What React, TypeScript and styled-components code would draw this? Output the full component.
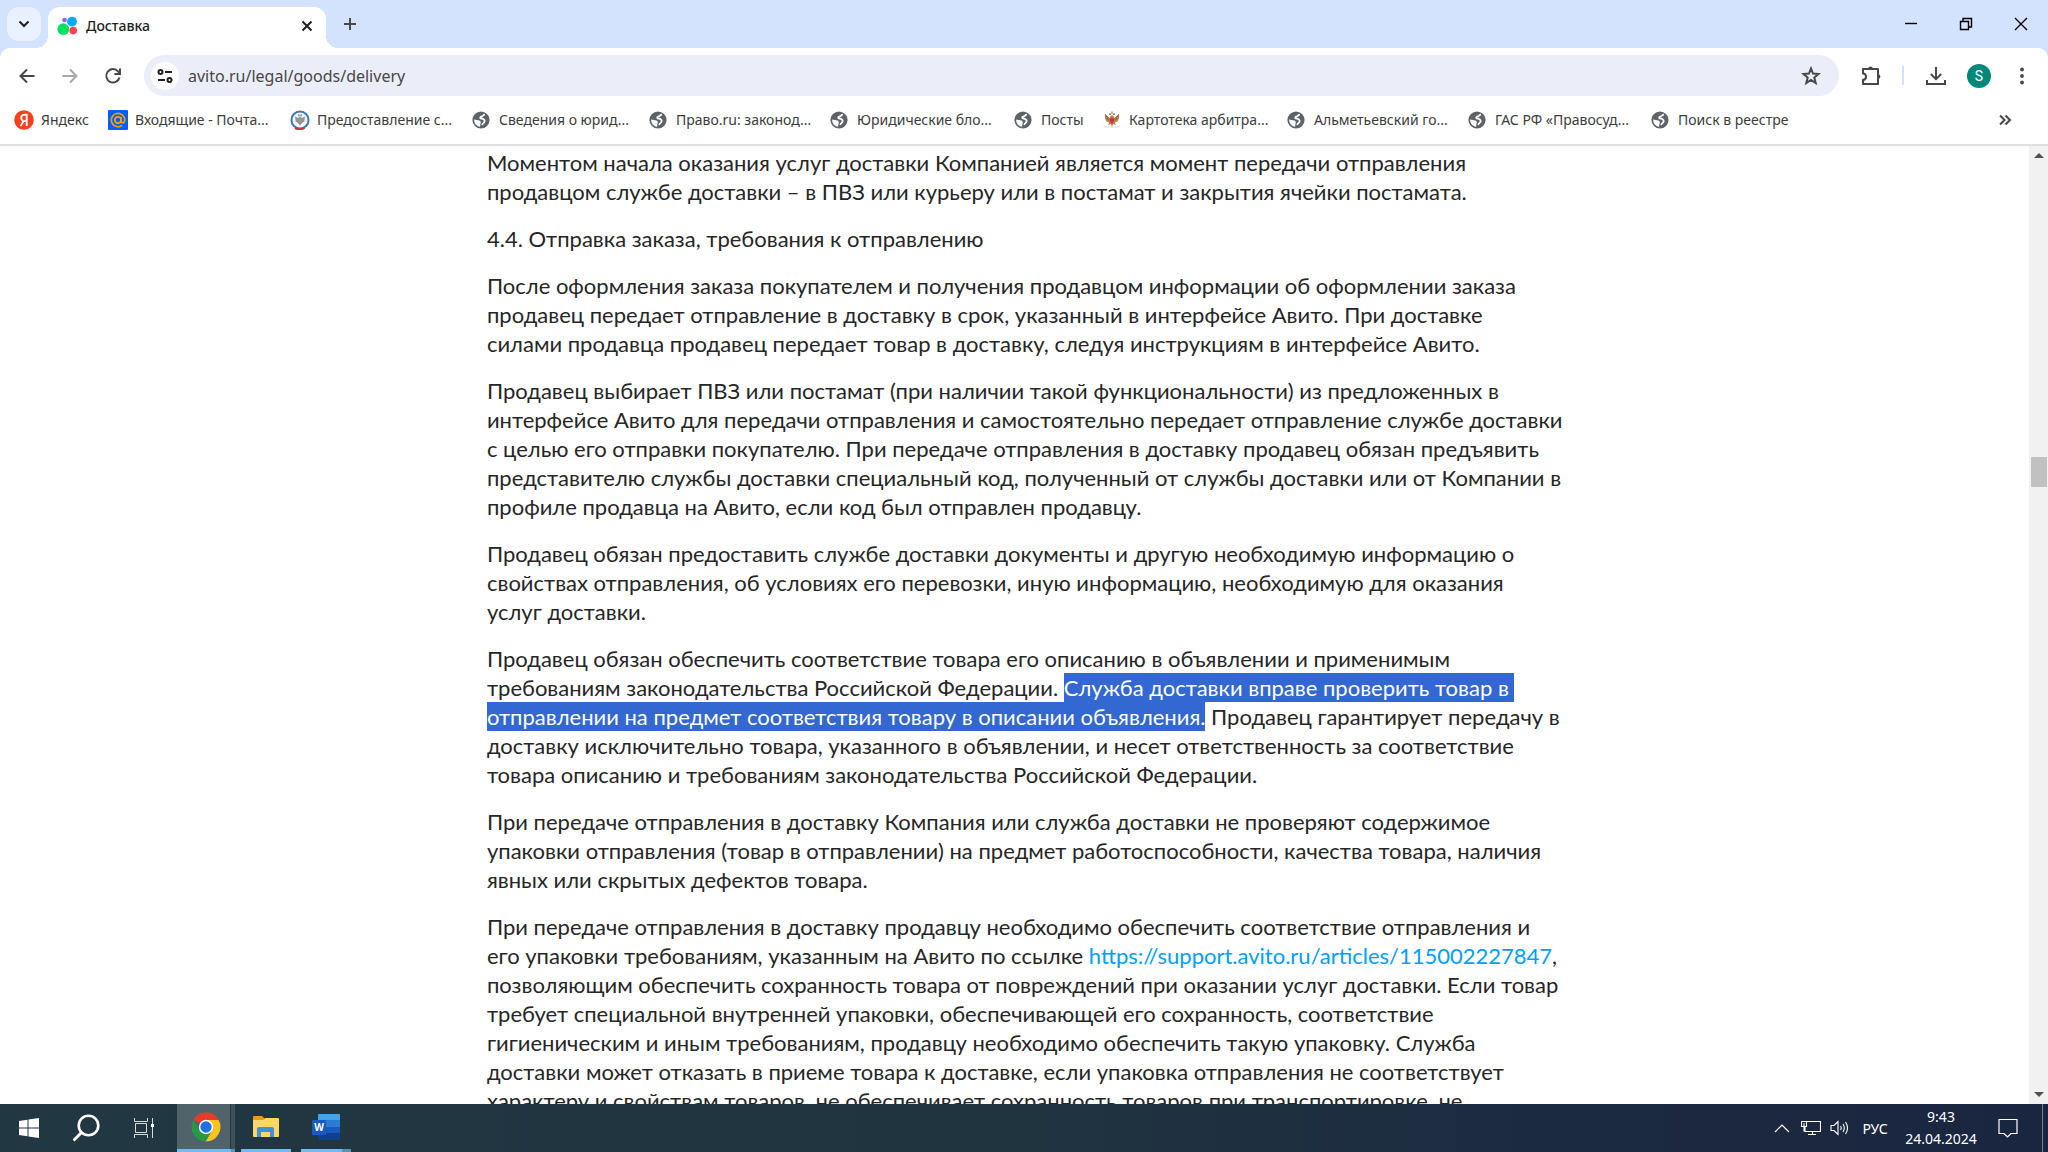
import React from "react";
import styled, { createGlobalStyle } from "styled-components";

const GlobalStyle = createGlobalStyle`
  *, *::before, *::after { box-sizing: border-box; }
  body { margin: 0; overflow: hidden; background: #fff; }
  button { border: 0; padding: 0; background: none; font: inherit; color: inherit; }
  svg { display: block; flex: none; }
`;

const uiFont = `"Noto Sans", "Open Sans", sans-serif`;

const Screen = styled.div`
  display: flex;
  flex-direction: column;
  height: 100vh;
  font-family: ${uiFont};
  color: #1f1f1f;
`;

/* ---------- Tab strip ---------- */

const TabStrip = styled.header`
  display: flex;
  align-items: center;
  flex: none;
  height: 48px;
  padding-left: 7px;
  background: #d3e3fd;
`;

const TabSearch = styled.button`
  display: grid;
  place-items: center;
  width: 34px;
  height: 34px;
  border-radius: 12px;
  background: #e9f1fe;
`;

const Tab = styled.div`
  position: relative;
  display: flex;
  align-items: center;
  align-self: flex-end;
  width: 278px;
  height: 41px;
  margin-left: 7px;
  padding: 0 9px 4px 9px;
  border-radius: 12px 12px 0 0;
  background: #fff;

  &::before,
  &::after {
    content: "";
    position: absolute;
    bottom: 0;
    width: 12px;
    height: 12px;
  }
  &::before {
    right: 100%;
    background: radial-gradient(circle at 0 0, transparent 12px, #fff 12px);
  }
  &::after {
    left: 100%;
    background: radial-gradient(circle at 100% 0, transparent 12px, #fff 12px);
  }
`;

const TabTitle = styled.span`
  flex: 1;
  margin-left: 9px;
  font-size: 14px;
  font-weight: 500;
  line-height: 20px;
`;

const IconButton = styled.button<{ $w?: number }>`
  display: grid;
  place-items: center;
  flex: none;
  width: ${(p) => p.$w ?? 36}px;
  height: 36px;
  color: #474747;

  &:disabled {
    color: #a8a8a8;
  }
`;

const TabClose = styled(IconButton)`
  height: 20px;
  color: #1f1f1f;
`;

const NewTab = styled(IconButton)`
  margin-left: 6px;
`;

const WindowControls = styled.div`
  display: flex;
  margin-left: auto;
`;

const WindowButton = styled(IconButton)`
  color: #000;
`;

/* ---------- Toolbar ---------- */

const ToolbarBack = styled.div`
  flex: none;
  background: #d3e3fd;
`;

const Toolbar = styled.nav`
  display: flex;
  align-items: center;
  height: 55px;
  padding: 0 8px 0 5px;
  border-radius: 10px 10px 0 0;
  background: #fff;
`;

const Omnibox = styled.form`
  display: flex;
  align-items: center;
  flex: 1;
  height: 41px;
  margin-left: 10px;
  padding: 0 10px 0 7px;
  border-radius: 21px;
  background: #ebeef8;
`;

const SiteInfo = styled.button`
  display: grid;
  place-items: center;
  flex: none;
  width: 28px;
  height: 28px;
  border-radius: 50%;
  background: #fff;
`;

const Address = styled.input`
  flex: 1;
  min-width: 0;
  margin-left: 9px;
  padding: 0;
  border: 0;
  outline: 0;
  background: transparent;
  color: #474747;
  font-family: ${uiFont};
  font-size: 16px;
  line-height: 24px;
`;

const ToolbarActions = styled.div`
  display: flex;
  align-items: center;
  margin-left: 14px;
`;

const Divider = styled.span`
  width: 2px;
  height: 19px;
  margin: 0 14px 0 13px;
  background: #d3e3fd;
`;

const Avatar = styled.button`
  width: 24px;
  height: 24px;
  margin: 0 13px;
  border-radius: 50%;
  background: #00897b;
  color: #fff;
  font-family: Roboto, sans-serif;
  font-size: 14px;
  line-height: 24px;
  text-align: center;
`;

/* ---------- Bookmarks ---------- */

const BookmarkBar = styled.nav`
  display: flex;
  align-items: center;
  height: 43px;
  padding: 0 25px 7px 14px;
  border-bottom: 2px solid #dedfe1;
  background: #fff;
  overflow: hidden;
`;

const Bookmark = styled.a<{ $w: number }>`
  display: flex;
  align-items: center;
  gap: 7px;
  flex: none;
  width: ${(p) => p.$w}px;
  color: #3c3c3c;
  font-size: 14px;
  line-height: 20px;
  text-decoration: none;
  white-space: nowrap;
`;

const MoreBookmarks = styled(IconButton)`
  height: 24px;
  margin-left: auto;
`;

/* ---------- Document ---------- */

const Viewport = styled.div`
  display: flex;
  flex: 1;
  min-height: 0;
`;

const Page = styled.main`
  display: grid;
  grid-template-columns: 24fr 76fr;
  align-items: start;
  flex: 1;
  min-width: 0;
  overflow: hidden;
  padding-top: 2px;
`;

const Article = styled.article`
  grid-column: 2;
  max-width: 1076px;
  color: #262626;
  font-family: Lato, "Open Sans", sans-serif;
  font-size: 22px;
  line-height: 29px;
`;

const Paragraph = styled.p`
  margin: 0 0 18px;
`;

const Heading = styled.h2`
  margin: 0 0 18px;
  font-size: 22px;
  font-weight: 400;
  line-height: 29px;
`;

const Selected = styled.mark`
  padding: 1px 0;
  background: #3367d1;
  color: #fff;
`;

const ArticleLink = styled.a`
  color: #009eff;
  text-decoration: none;
`;

const Scrollbar = styled.div`
  display: flex;
  flex-direction: column;
  flex: none;
  width: 19px;
  background: #f1f1f1;
`;

const ScrollButton = styled.button`
  display: grid;
  place-items: center;
  flex: none;
  height: 19px;
`;

const Track = styled.span<{ $share: number }>`
  flex: ${(p) => p.$share} 0 0;
`;

const Thumb = styled.span`
  flex: none;
  height: 30px;
  margin: 0 1px 0 2px;
  background: #c1c1c1;
`;

/* ---------- Taskbar ---------- */

const Taskbar = styled.footer`
  display: flex;
  align-items: stretch;
  flex: none;
  height: 48px;
  background: linear-gradient(90deg, #213742 0%, #203440 50%, #1c2a40 75%, #1a2640 100%);
  color: #fff;
`;

const TaskButton = styled.button`
  display: grid;
  place-items: center;
  width: 58px;
`;

const AppButton = styled.button<{ $active?: boolean; $stack?: boolean }>`
  position: relative;
  display: grid;
  place-items: center;
  width: ${(p) => (p.$active ? 58 : 50)}px;
  margin: ${(p) => (p.$active ? "0 1px 0 3px" : "0 5px")};
  border-bottom: 3px solid #76b9ed;
  background: ${(p) =>
    p.$active ? "linear-gradient(90deg, #50636b 53px, #26373f 53px, #26373f 54px, #3d4f58 54px)" : "none"};

  &::after {
    content: "";
    position: absolute;
    right: 0;
    bottom: -3px;
    width: ${(p) => (p.$active ? 4 : 9)}px;
    height: 3px;
    background: #5a91b8;
    display: ${(p) => (p.$stack ? "block" : "none")};
  }
`;

const Tray = styled.div`
  display: flex;
  align-items: stretch;
  margin-left: auto;
  margin-right: 12px;
`;

const TrayButton = styled.button<{ $w: number }>`
  display: grid;
  place-items: center;
  width: ${(p) => p.$w}px;
  font-size: 14px;
`;

const Clock = styled.button`
  width: 90px;
  font-size: 14px;
  line-height: 22px;
  text-align: center;
`;

const ShowDesktop = styled.button`
  width: 6px;
  border-left: 1px solid #77808e;
`;

/* ---------- Icons ---------- */

const Stroke = ({ d, size = 20, w = 2, children }: {
  d: string; size?: number; w?: number; children?: React.ReactNode;
}) => (
  <svg width={size} height={size} viewBox={`0 0 ${size} ${size}`} fill="none" stroke="currentColor" strokeWidth={w}>
    <path d={d} />
    {children}
  </svg>
);

const Globe = () => (
  <svg width="20" height="20" viewBox="0 0 20 20">
    <circle cx="9" cy="10" r="8.6" fill="#5f6368" />
    <path d="M2.1 9.6 L6.1 10.2 C8.1 10.5 8.9 11.4 8.8 12.6 L8.3 14.4 L8.1 16.8 C4.7 16.4 2.1 13.6 2.1 9.6Z" fill="#fff" />
    <path d="M12.9 4.6 C10.9 4.6 11.5 6 9.9 6.4 C8.1 6.9 7.7 8 8.9 8.4 C10.7 8.8 12.9 9.2 12.7 11.2 C12.5 13 10.9 12.8 10.1 15" fill="none" stroke="#fff" strokeWidth="1.7" />
  </svg>
);

const Yandex = () => (
  <svg width="20" height="20" viewBox="0 0 20 20">
    <circle cx="10" cy="10" r="9.8" fill="#fc3f1d" />
    <path d="M12.7 16 V4.8 H10.8 C8.5 4.8 7.2 6 7.2 8 C7.2 9.6 8 10.4 9.4 11.4 L6.6 16 M10.2 11 H12.7" fill="none" stroke="#fff" strokeWidth="1.9" />
  </svg>
);

const MailRu = () => (
  <svg width="20" height="20" viewBox="0 0 20 20">
    <rect width="20" height="20" rx="1" fill="#005ff9" />
    <circle cx="10" cy="10" r="3.1" fill="none" stroke="#ff9e00" strokeWidth="1.7" />
    <path d="M13.1 6.9 V11 C13.1 13.6 16.7 13.6 16.7 10 A6.7 6.7 0 1 0 14 15.4" fill="none" stroke="#ff9e00" strokeWidth="1.7" />
  </svg>
);

const TaxService = () => (
  <svg width="20" height="20" viewBox="0 0 20 20">
    <circle cx="10" cy="10" r="8.6" fill="#f4f5f4" stroke="#3f78a8" strokeWidth="2" />
    <path d="M5 18 Q10 20.6 14.6 18" fill="none" stroke="#d4303c" strokeWidth="2" />
    <path d="M5 6.5 L8.3 8 L10 6 L11.7 8 L15 6.5 L14.4 11.5 L12 13 L10 15.5 L8 13 L5.6 11.5Z" fill="#8b969d" />
    <path d="M8.7 8.8 H11.4 V11.5 L10 12.8 L8.7 11.5Z" fill="#b89a72" />
    <circle cx="8.8" cy="5.3" r="1" fill="#8b969d" /><circle cx="11.2" cy="5.3" r="1" fill="#8b969d" />
  </svg>
);

const Eagle = () => (
  <svg width="20" height="20" viewBox="0 0 20 20">
    <path d="M1.5 16.8 H18.5" stroke="#ece8e2" strokeWidth="2" />
    <path d="M2.8 3.4 L5 5.6 L7.5 8 L9 5.5 H11 L12.5 8 L15 5.6 L17.2 3.4 L17 8.6 L15.4 11.4 L12.8 12.6 L14 15 L11.2 14 L10 16.4 L8.8 14 L6 15 L7.2 12.6 L4.6 11.4 L3 8.6Z" fill="#b5814f" />
    <path d="M4.2 5.9 L6.4 10 M15.8 5.9 L13.6 10" stroke="#8a6040" strokeWidth="1" />
    <path d="M8 8.3 H12 V11.5 L10 13.2 L8 11.5Z" fill="#cf3038" />
    <path d="M8 2.6 L9.2 5 H7Z M12 2.6 L13 5 H10.8Z M9.5 1.6 H10.5 V4 H9.5Z" fill="#8c6a50" />
  </svg>
);

const bookmarks: [string, React.FC, number][] = [
  ["Яндекс", Yandex, 94],
  ["Входящие - Почта...", MailRu, 182],
  ["Предоставление с...", TaxService, 182],
  ["Сведения о юрид...", Globe, 177],
  ["Право.ru: законод...", Globe, 181],
  ["Юридические бло...", Globe, 184],
  ["Посты", Globe, 88],
  ["Картотека арбитра...", Eagle, 185],
  ["Альметьевский го...", Globe, 181],
  ["ГАС РФ «Правосуд...", Globe, 183],
  ["Поиск в реестре", Globe, 160],
];

const Chrome = () => (
  <svg width="30" height="30" viewBox="0 0 30 30">
    <path d="M15 15 L2.3 7.7 A14.6 14.6 0 0 1 27.7 7.7Z" fill="#e33b2e" />
    <path d="M27.6 8 A14.5 14.5 0 0 1 14.5 29.5 L21 18.5 L15 8Z" fill="#fcc31e" />
    <path d="M2.4 7.8 A14.5 14.5 0 0 0 14.6 29.5 L20.8 18.6 L9 18.4Z" fill="#279847" />
    <circle cx="15" cy="15" r="7.2" fill="#fff" />
    <circle cx="15" cy="15" r="5.7" fill="#1f6fe8" />
  </svg>
);

const Explorer = () => (
  <svg width="28" height="24" viewBox="0 0 28 24">
    <path d="M1 2 Q1 1 2 1 H10 L12 3 V6 H1Z" fill="#e4a00f" />
    <path d="M1 5 H11 L13 3 H26 Q27 3 27 4 V21 Q27 22 26 22 H2 Q1 22 1 21Z" fill="#ffd667" />
    <path d="M5 22 V14 Q5 12 7 12 H20 Q22 12 22 14 V22 H18 V17 H9 V22Z" fill="#3d93d8" />
  </svg>
);

const Word = () => (
  <svg width="30" height="28" viewBox="0 0 30 28">
    <path d="M7 2 Q7 1 8 1 H28 Q29 1 29 2 V8 H7Z" fill="#41a5ee" />
    <path d="M7 7 H29 V14 H7Z" fill="#2b7cd3" />
    <path d="M7 14 H29 V20 H7Z" fill="#185abd" />
    <path d="M7 20 H29 V26 Q29 27 28 27 H8 Q7 27 7 26Z" fill="#103f91" />
    <rect x="1" y="7" width="14" height="15" rx="1" fill="#185abd" />
    <text x="8" y="18" fill="#fff" fontFamily="Open Sans, sans-serif" fontWeight="700" fontSize="10" textAnchor="middle">W</text>
  </svg>
);

export default function App() {
  return (
    <Screen>
      <GlobalStyle />
      <TabStrip>
        <TabSearch aria-label="Поиск вкладок"><Stroke d="M5.5 7.5 L10 12 L14.5 7.5" /></TabSearch>
        <Tab>
          <svg width="20" height="20" viewBox="0 0 20 20">
            <circle cx="6.3" cy="13.2" r="5.9" fill="#04e061" />
            <circle cx="15" cy="5.6" r="4.9" fill="#00aaff" />
            <circle cx="16.2" cy="14.6" r="3.8" fill="#ff4053" />
            <circle cx="7.5" cy="4" r="2.3" fill="#965eeb" />
          </svg>
          <TabTitle>Доставка</TabTitle>
          <TabClose $w={20} aria-label="Закрыть вкладку"><Stroke d="M5.5 5.5 L14.5 14.5 M14.5 5.5 L5.5 14.5" /></TabClose>
        </Tab>
        <NewTab aria-label="Новая вкладка"><Stroke d="M10 4 V16 M4 10 H16" /></NewTab>
        <WindowControls>
          <WindowButton $w={55} aria-label="Свернуть"><Stroke d="M4 9.5 H16" w={1.4} /></WindowButton>
          <WindowButton $w={55} aria-label="Окно"><Stroke d="M4.5 7.5 H12.5 V15.5 H4.5Z M7 7 V4.5 H15.5 V13 H13" w={1.4} /></WindowButton>
          <WindowButton $w={55} aria-label="Закрыть"><Stroke d="M4 4 L16 16 M16 4 L4 16" w={1.4} /></WindowButton>
        </WindowControls>
      </TabStrip>

      <ToolbarBack>
        <Toolbar>
          <IconButton $w={43} aria-label="Назад"><Stroke d="M17.5 10 H4 M10 3.5 L3.5 10 L10 16.5" /></IconButton>
          <IconButton $w={43} aria-label="Вперёд" disabled><Stroke d="M2.5 10 H16 M10 3.5 L16.5 10 L10 16.5" /></IconButton>
          <IconButton $w={43} aria-label="Обновить"><Stroke d="M16.5 11.5 A6.7 6.7 0 1 1 15 5.3 L17 7.5 M17 2.5 V8 H11.5" /></IconButton>
          <Omnibox onSubmit={(e) => e.preventDefault()}>
            <SiteInfo type="button" aria-label="Сведения о сайте">
              <Stroke d="M10 6 H17 M3 14 H10"><circle cx="5.5" cy="6" r="2" /><circle cx="14.5" cy="14" r="2" /></Stroke>
            </SiteInfo>
            <Address aria-label="Адресная строка" defaultValue="avito.ru/legal/goods/delivery" />
            <IconButton type="button" aria-label="Добавить в закладки">
              <Stroke d="M10 2.5 L12 7.6 L17.6 8 L13.3 11.6 L14.7 17 L10 14 L5.3 17 L6.7 11.6 L2.4 8 L8 7.6Z" />
            </IconButton>
          </Omnibox>
          <ToolbarActions>
            <IconButton aria-label="Расширения">
              <svg width="22" height="22" viewBox="0 0 22 22" fill="none" stroke="#474747" strokeWidth="2">
                <path d="M3 4 H18 V19 H3 V14.8 C7 14.8 7 8.5 3 8.5Z" strokeLinejoin="round" />
                <path d="M8 3.5 A2.6 2.6 0 0 1 13 3.5Z M18.5 9 A2.6 2.6 0 0 1 18.5 14Z" fill="#474747" stroke="none" />
              </svg>
            </IconButton>
            <Divider />
            <IconButton aria-label="Загрузки"><Stroke d="M10 1 V13 M4.8 8 L10 13.2 L15.2 8 M1 14 V18 H19 V14" /></IconButton>
            <Avatar aria-label="Профиль">S</Avatar>
            <IconButton aria-label="Меню">
              <svg width="20" height="20" fill="#474747"><circle cx="10" cy="3.5" r="1.9" /><circle cx="10" cy="10" r="1.9" /><circle cx="10" cy="16.5" r="1.9" /></svg>
            </IconButton>
          </ToolbarActions>
        </Toolbar>
        <BookmarkBar>
          {bookmarks.map(([label, Icon, w]) => (
            <Bookmark key={label} href="#" $w={w}><Icon />{label}</Bookmark>
          ))}
          <MoreBookmarks aria-label="Другие закладки"><Stroke d="M5 5.5 L9.5 10 L5 14.5 M10.5 5.5 L15 10 L10.5 14.5" /></MoreBookmarks>
        </BookmarkBar>
      </ToolbarBack>

      <Viewport>
        <Page>
          <Article>
            <Paragraph>
              Моментом начала оказания услуг доставки Компанией является момент передачи отправления
              продавцом службе доставки – в ПВЗ или курьеру или в постамат и закрытия ячейки постамата.
            </Paragraph>
            <Heading>4.4. Отправка заказа, требования к отправлению</Heading>
            <Paragraph>
              После оформления заказа покупателем и получения продавцом информации об оформлении заказа
              продавец передает отправление в доставку в срок, указанный в интерфейсе Авито. При доставке
              силами продавца продавец передает товар в доставку, следуя инструкциям в интерфейсе Авито.
            </Paragraph>
            <Paragraph>
              Продавец выбирает ПВЗ или постамат (при наличии такой функциональности) из предложенных в
              интерфейсе Авито для передачи отправления и самостоятельно передает отправление службе доставки
              с целью его отправки покупателю. При передаче отправления в доставку продавец обязан предъявить
              представителю службы доставки специальный код, полученный от службы доставки или от Компании в
              профиле продавца на Авито, если код был отправлен продавцу.
            </Paragraph>
            <Paragraph>
              Продавец обязан предоставить службе доставки документы и другую необходимую информацию о
              свойствах отправления, об условиях его перевозки, иную информацию, необходимую для оказания
              услуг доставки.
            </Paragraph>
            <Paragraph>
              Продавец обязан обеспечить соответствие товара его описанию в объявлении и применимым
              требованиям законодательства Российской Федерации.{" "}
              <Selected>
                Служба доставки вправе проверить товар в&nbsp;{" "}
                отправлении на предмет соответствия товару в описании объявления.
              </Selected>{" "}
              Продавец гарантирует передачу в
              доставку исключительно товара, указанного в объявлении, и несет ответственность за соответствие
              товара описанию и требованиям законодательства Российской Федерации.
            </Paragraph>
            <Paragraph>
              При передаче отправления в доставку Компания или служба доставки не проверяют содержимое
              упаковки отправления (товар в отправлении) на предмет работоспособности, качества товара, наличия
              явных или скрытых дефектов товара.
            </Paragraph>
            <Paragraph>
              При передаче отправления в доставку продавцу необходимо обеспечить соответствие отправления и
              его упаковки требованиям, указанным на Авито по ссылке{" "}
              <ArticleLink href="https://support.avito.ru/articles/115002227847">https://support.avito.ru/articles/115002227847</ArticleLink>,
              позволяющим обеспечить сохранность товара от повреждений при оказании услуг доставки. Если товар
              требует специальной внутренней упаковки, обеспечивающей его сохранность, соответствие
              гигиеническим и иным требованиям, продавцу необходимо обеспечить такую упаковку. Служба
              доставки может отказать в приеме товара к доставке, если упаковка отправления не соответствует
              характеру и свойствам товаров, не обеспечивает сохранность товаров при транспортировке, не
            </Paragraph>
          </Article>
        </Page>
        <Scrollbar>
          <ScrollButton aria-label="Вверх"><svg width="10" height="5"><path d="M0 5 L5 0 L10 5Z" fill="#505050" /></svg></ScrollButton>
          <Track $share={292} />
          <Thumb />
          <Track $share={598} />
          <ScrollButton aria-label="Вниз"><svg width="10" height="5"><path d="M0 0 L5 5 L10 0Z" fill="#505050" /></svg></ScrollButton>
        </Scrollbar>
      </Viewport>

      <Taskbar>
        <TaskButton aria-label="Пуск">
          <svg width="20" height="20" fill="#fff"><path d="M0 3 L8.5 1.8 V9.5 H0Z M9.5 1.6 L20 0 V9.5 H9.5Z M0 10.5 H8.5 V18.2 L0 17Z M9.5 10.5 H20 V20 L9.5 18.4Z" /></svg>
        </TaskButton>
        <TaskButton aria-label="Поиск">
          <svg width="28" height="28" fill="none" stroke="#fff" strokeWidth="2.6"><circle cx="15.5" cy="11.5" r="9.8" /><path d="M8.5 18.5 L.5 26.5" strokeWidth="3" /></svg>
        </TaskButton>
        <TaskButton aria-label="Представление задач">
          <svg width="22" height="20" fill="none" stroke="#d5dadd" strokeWidth="1"><path d="M.5 0 V3.5 H13.5 V0 M.5 20 V16.5 H13.5 V20 M1.5 5.5 H12.5 V14.5 H1.5Z M18.5 0 V20" /><path d="M17 6 H20 V9 H17Z" fill="#fff" stroke="none" /></svg>
        </TaskButton>
        <AppButton $active $stack aria-label="Google Chrome"><Chrome /></AppButton>
        <AppButton aria-label="Проводник"><Explorer /></AppButton>
        <AppButton $stack aria-label="Word"><Word /></AppButton>
        <Tray>
          <TrayButton $w={29} aria-label="Скрытые значки"><svg width="16" height="10" fill="none" stroke="#fff" strokeWidth="1.2"><path d="M1 9 L8 2 L15 9" /></svg></TrayButton>
          <TrayButton $w={29} aria-label="Сеть">
            <svg width="20" height="16" fill="none" stroke="#fff" strokeWidth="1.1"><path d="M6 1.5 H19.5 V11.5 H4 V7 M11.5 11.5 V14.5 M7 14.5 H15 M.5 1.5 H5.5 V6.5 H.5Z M3 3 V11.5" /></svg>
          </TrayButton>
          <TrayButton $w={29} aria-label="Громкость">
            <svg width="20" height="16" fill="none" stroke="#fff" strokeWidth="1.1"><path d="M1 5.5 H4 L8 1.5 V14.5 L4 10.5 H1Z M10.5 6 Q12 8 10.5 10 M13 4 Q15.6 8 13 12 M15.5 2 Q19.6 8 15.5 14" /></svg>
          </TrayButton>
          <TrayButton $w={42}>РУС</TrayButton>
          <Clock>9:43<br />24.04.2024</Clock>
          <TrayButton $w={44} aria-label="Уведомления"><svg width="20" height="20" fill="none" stroke="#fff" strokeWidth="1.2"><path d="M1 1.5 H19 V15.5 H13 L9.5 19 L6 15.5 H1Z" /></svg></TrayButton>
        </Tray>
        <ShowDesktop aria-label="Свернуть все окна" />
      </Taskbar>
    </Screen>
  );
}
